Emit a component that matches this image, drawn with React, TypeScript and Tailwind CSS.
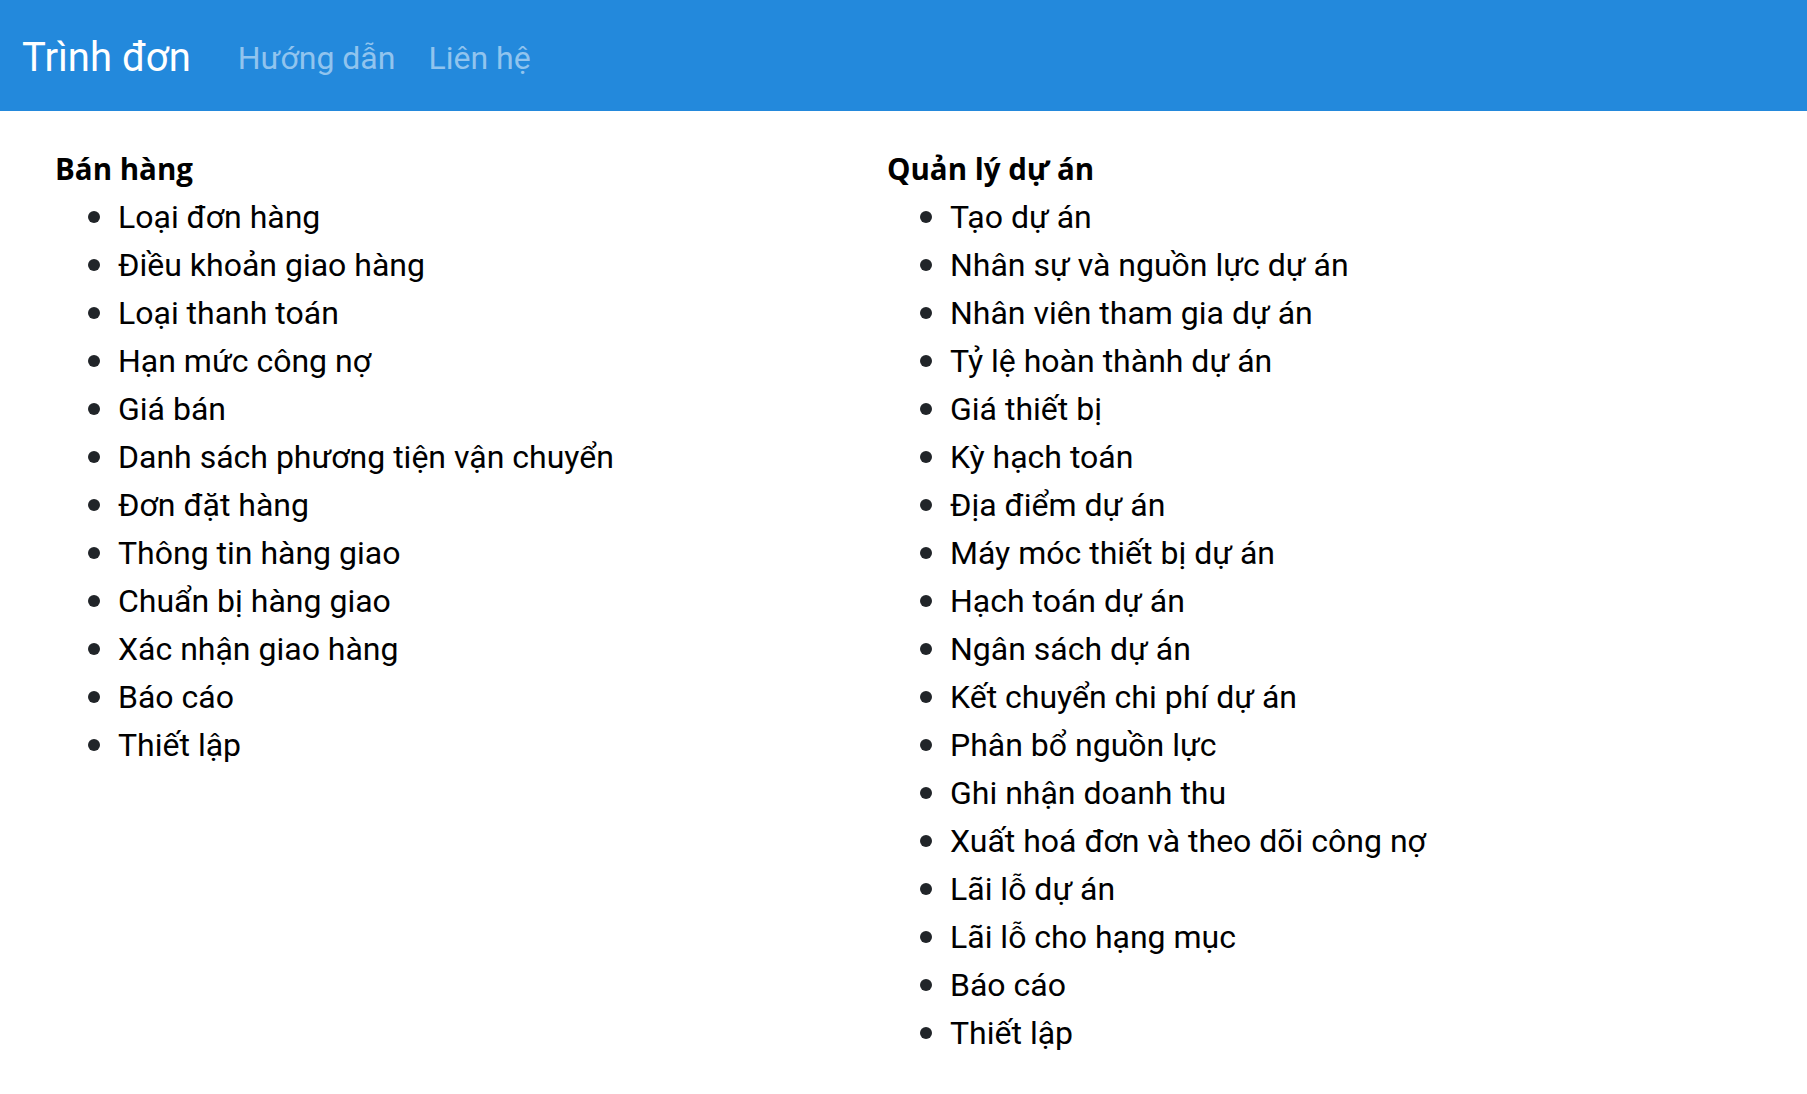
const sales = [
  "Loại đơn hàng",
  "Điều khoản giao hàng",
  "Loại thanh toán",
  "Hạn mức công nợ",
  "Giá bán",
  "Danh sách phương tiện vận chuyển",
  "Đơn đặt hàng",
  "Thông tin hàng giao",
  "Chuẩn bị hàng giao",
  "Xác nhận giao hàng",
  "Báo cáo",
  "Thiết lập",
];

const projects = [
  "Tạo dự án",
  "Nhân sự và nguồn lực dự án",
  "Nhân viên tham gia dự án",
  "Tỷ lệ hoàn thành dự án",
  "Giá thiết bị",
  "Kỳ hạch toán",
  "Địa điểm dự án",
  "Máy móc thiết bị dự án",
  "Hạch toán dự án",
  "Ngân sách dự án",
  "Kết chuyển chi phí dự án",
  "Phân bổ nguồn lực",
  "Ghi nhận doanh thu",
  "Xuất hoá đơn và theo dõi công nợ",
  "Lãi lỗ dự án",
  "Lãi lỗ cho hạng mục",
  "Báo cáo",
  "Thiết lập",
];

function Section({ title, items }: { title: string; items: string[] }) {
  return (
    <div>
      <h2 className="h-[48px] leading-[48px] text-[29.5px] font-bold text-black font-['Open_Sans',sans-serif]">
        {title}
      </h2>
      <ul>
        {items.map((it, i) => (
          <li key={i} className="flex h-[48px] items-center pl-[33px]">
            <span className="mr-[18px] mt-[-1px] h-[12px] w-[12px] shrink-0 rounded-full bg-[#212529]" />
            <span className="text-[32px] leading-[48px] text-black">{it}</span>
          </li>
        ))}
      </ul>
    </div>
  );
}

export default function App() {
  return (
    <div className="min-h-screen bg-white font-['Roboto',sans-serif]">
      <nav className="flex h-[111px] items-center bg-[#2389dc] pl-[22px] pt-[4px]">
        <span className="text-[40px] leading-[60px] text-white">Trình đơn</span>
        <span className="ml-[47px] text-[32px] leading-[48px] text-[#91c4ee]">Hướng dẫn</span>
        <span className="ml-[33px] text-[32px] leading-[48px] text-[#91c4ee]">Liên hệ</span>
      </nav>
      <main className="grid grid-cols-[832px_1fr] pl-[55px] pt-[34px]">
        <Section title="Bán hàng" items={sales} />
        <Section title="Quản lý dự án" items={projects} />
      </main>
    </div>
  );
}
